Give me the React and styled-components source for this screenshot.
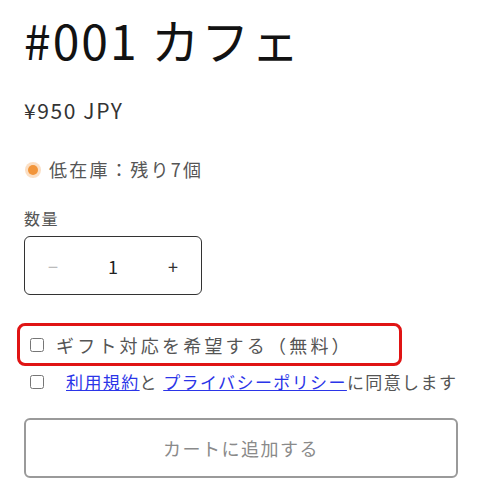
import React from 'react';
import styled, { createGlobalStyle } from 'styled-components';

const GlobalStyle = createGlobalStyle`
  body {
    margin: 0;
    background: #ffffff;
    font-family: "Noto Sans CJK JP", "Noto Sans", sans-serif;
    color: #121212;
  }
`;

function App() {
  return (
    <>
      <GlobalStyle />
      <Page>
        <Title>#001 カフェ</Title>
        <Price>¥950 JPY</Price>
        <Stock>
          <StockDot />
          低在庫：残り7個
        </Stock>
        <QtyLabel>数量</QtyLabel>
        <QtyBox>
          <QtyButton disabled>−</QtyButton>
          <QtyValue>1</QtyValue>
          <QtyButton>+</QtyButton>
        </QtyBox>
        <GiftBox>
          <CheckRow>
            <Checkbox type="checkbox" />
            <GiftText>ギフト対応を希望する（無料）</GiftText>
          </CheckRow>
        </GiftBox>
        <AgreeRow>
          <Checkbox type="checkbox" />
          <AgreeText>
            <Link href="#">利用規約</Link>と <Link href="#">プライバシーポリシー</Link>に同意します
          </AgreeText>
        </AgreeRow>
        <CartButton disabled>カートに追加する</CartButton>
      </Page>
    </>
  );
}

export default App;

const Page = styled.div`
  width: 436px;
  padding: 8px 0 0 24px;
  display: flex;
  flex-direction: column;
`;

const Title = styled.h1`
  margin: 0;
  font-size: 48px;
  font-weight: 400;
  line-height: 62px;
  letter-spacing: 2px;
  color: #121212;
`;

const Price = styled.div`
  margin-top: 27px;
  font-size: 21px;
  line-height: 26px;
  letter-spacing: 1.6px;
  color: #333333;
`;

const Stock = styled.div`
  margin-top: 33px;
  display: flex;
  align-items: center;
  gap: 11px;
  font-size: 18px;
  line-height: 27px;
  letter-spacing: 2.3px;
  color: #555555;
`;

const StockDot = styled.span`
  width: 10px;
  height: 10px;
  border-radius: 50%;
  background: #f2953a;
  box-shadow: 0 0 0 3px rgba(242, 149, 58, 0.3);
  margin-left: 4px;
`;

const QtyLabel = styled.div`
  margin-top: 24px;
  font-size: 16px;
  line-height: 22px;
  letter-spacing: 1.5px;
  color: #555555;
`;

const QtyBox = styled.div`
  margin-top: 7px;
  width: 178px;
  height: 59px;
  box-sizing: border-box;
  border: 1.5px solid #333333;
  border-radius: 6px;
  display: grid;
  grid-template-columns: 56px 1fr 56px;
  align-items: center;
`;

const QtyButton = styled.button`
  background: none;
  border: none;
  padding: 0;
  font-family: inherit;
  font-size: 18px;
  color: ${(p) => (p.disabled ? '#bbbbbb' : '#333333')};
  cursor: pointer;
`;

const QtyValue = styled.div`
  text-align: center;
  font-size: 18px;
  color: #222222;
`;

const GiftBox = styled.div`
  margin-top: 28px;
  margin-left: -7px;
  width: 385px;
  height: 43px;
  box-sizing: border-box;
  border: 3px solid #e01414;
  border-radius: 8px;
  display: flex;
  align-items: center;
  padding-left: 10px;
`;

const CheckRow = styled.label`
  display: flex;
  align-items: center;
  gap: 12px;
`;

const Checkbox = styled.input`
  margin: 0;
  width: 14px;
  height: 14px;
`;

const GiftText = styled.span`
  font-size: 18px;
  letter-spacing: 3.2px;
  color: #555555;
`;

const AgreeRow = styled.label`
  margin-top: 4px;
  height: 24px;
  display: flex;
  align-items: center;
  padding-left: 6px;
  gap: 22px;
`;

const AgreeText = styled.span`
  font-size: 17px;
  line-height: 24px;
  letter-spacing: 1.4px;
  color: #555555;
`;

const Link = styled.a`
  color: #2b35e8;
  text-decoration: underline;
`;

const CartButton = styled.button`
  margin-top: 24px;
  width: 434px;
  height: 60px;
  box-sizing: border-box;
  background: #ffffff;
  border: 2px solid #9a9a9a;
  border-radius: 6px;
  font-family: inherit;
  font-size: 18px;
  letter-spacing: 1.5px;
  color: #8a8a8a;
`;
